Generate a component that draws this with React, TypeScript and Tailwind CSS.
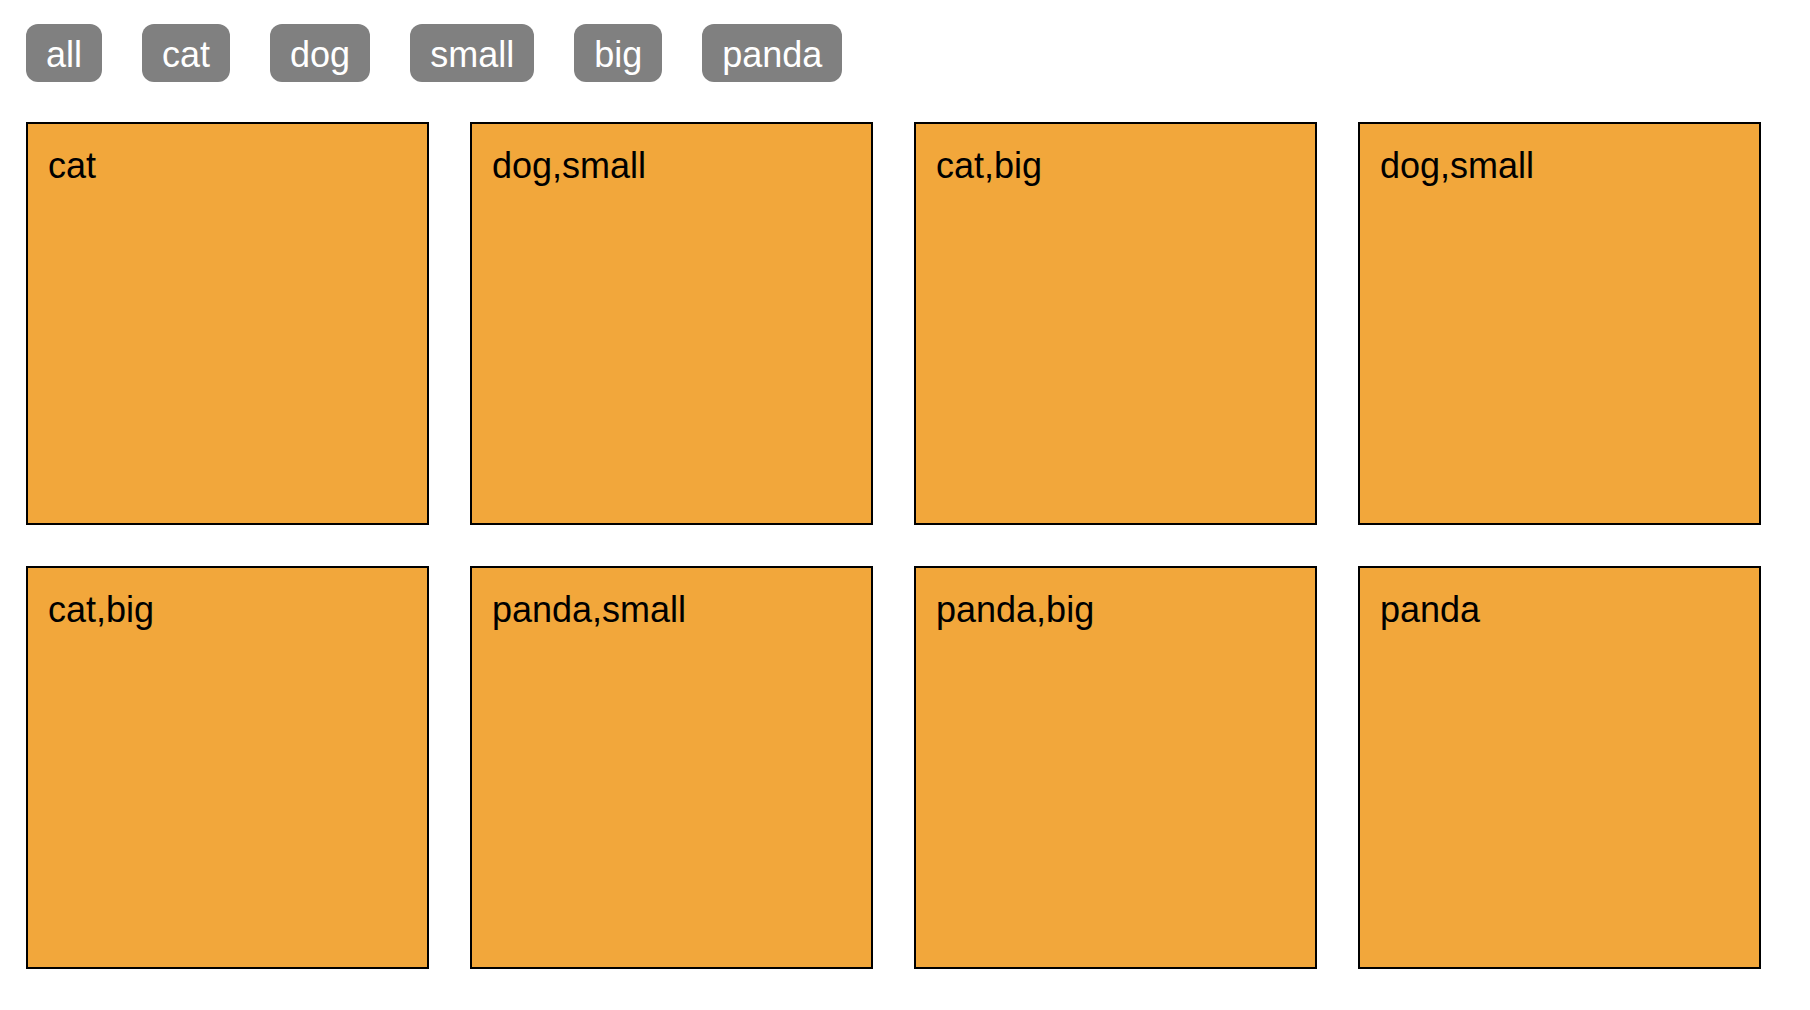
import React from "react";

const tags = ["all", "cat", "dog", "small", "big", "panda"];
const cards = ["cat", "dog,small", "cat,big", "dog,small", "cat,big", "panda,small", "panda,big", "panda"];

export default function App() {
  return (
    <div className="min-h-screen bg-white pl-[26px] pt-[24px]" style={{ fontFamily: '"Liberation Sans", Arial, sans-serif' }}>
      <div className="flex gap-[40px]">
        {tags.map((t) => (
          <button
            key={t}
            className="h-[58px] px-[20px] pt-[4px] flex items-center rounded-[12px] bg-[#808080] text-white text-[36px] leading-none"
          >
            {t}
          </button>
        ))}
      </div>
      <div className="mt-[40px] grid grid-cols-[repeat(4,403px)] gap-[41px]">
        {cards.map((c, i) => (
          <div
            key={i}
            className="w-[403px] h-[403px] border-2 border-black bg-[#f2a73b] pt-[15px] px-[20px] text-[36px] text-black"
          >
            {c}
          </div>
        ))}
      </div>
    </div>
  );
}
